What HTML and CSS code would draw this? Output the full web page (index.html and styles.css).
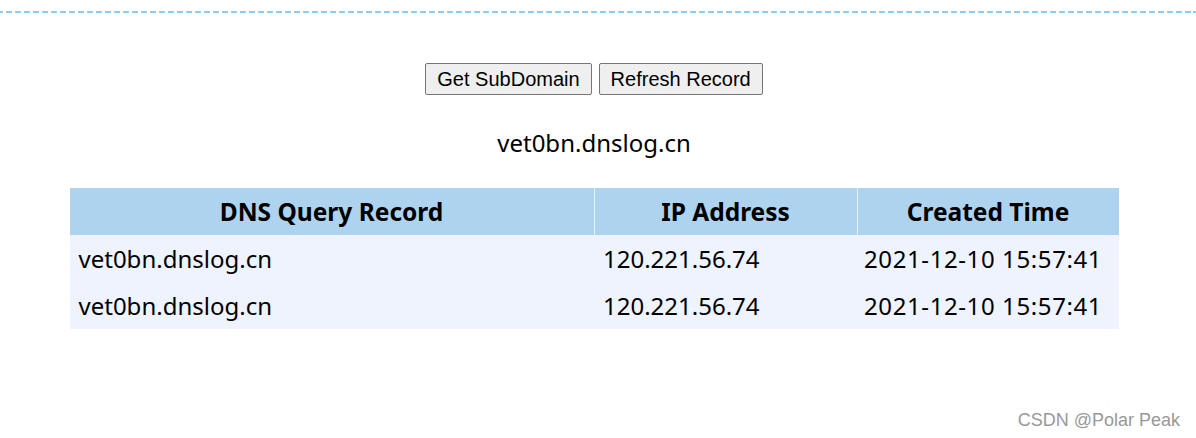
FILE: index.html
```html
<!DOCTYPE html>
<html lang="en">
<head>
<meta charset="utf-8">
<title>DNSLog</title>
<link rel="stylesheet" href="styles.css">
</head>
<body>
<div class="topline"></div>
<main class="page">
  <div class="actions">
    <button class="btn" type="button">Get SubDomain</button>
    <button class="btn" type="button">Refresh Record</button>
  </div>
  <p class="domain">vet0bn.dnslog.cn</p>
  <table class="records">
    <thead>
      <tr>
        <th class="c1">DNS Query Record</th>
        <th class="c2">IP Address</th>
        <th class="c3">Created Time</th>
      </tr>
    </thead>
    <tbody>
      <tr>
        <td>vet0bn.dnslog.cn</td>
        <td>120.221.56.74</td>
        <td class="time">2021-12-10 15:57:41</td>
      </tr>
      <tr>
        <td>vet0bn.dnslog.cn</td>
        <td>120.221.56.74</td>
        <td class="time">2021-12-10 15:57:41</td>
      </tr>
    </tbody>
  </table>
</main>
<div class="watermark">CSDN @Polar Peak</div>
</body>
</html>
```

FILE: styles.css
```css
html, body {
  margin: 0;
  padding: 0;
  background: #ffffff;
}
body {
  width: 1196px;
  height: 438px;
  position: relative;
  overflow: hidden;
  font-family: "Noto Sans", "Open Sans", sans-serif;
  color: #000;
}
.topline {
  margin-top: 11px;
  height: 2px;
  background: repeating-linear-gradient(to right, #8ccbf4 0 6px, transparent 6px 9px);
  background-position: -3px 0;
}
.page {
  width: 1188px;
  text-align: center;
}
.actions {
  display: flex;
  justify-content: center;
  gap: 7px;
  margin-top: 50px;
}
.btn {
  font-family: "Liberation Sans", Arial, sans-serif;
  font-size: 20px;
  height: 32px;
  padding: 0 11px;
  background: #efefef;
  border: 1px solid #767676;
  border-radius: 2px;
  color: #000;
}
.domain {
  margin: 32px 0 0;
  font-size: 24px;
  line-height: 32px;
}
.records {
  width: 1049px;
  margin: 29px auto 0;
  border-collapse: collapse;
  font-size: 24px;
}
.records th {
  background: #aed3ee;
  height: 47px;
  padding: 0;
  font-weight: bold;
  font-size: 24.5px;
}
.records th + th {
  border-left: 1px solid #e8f2fa;
}
.records .c1 { width: 524px; }
.records .c2 { width: 262px; }
.records td {
  background: #eef3fd;
  height: 47px;
  padding: 0 0 0 9px;
  text-align: left;
}
.records td.time {
  letter-spacing: 0.6px;
  padding-left: 7px;
}
.watermark {
  position: absolute;
  right: 16px;
  top: 410px;
  font-family: "Liberation Sans", Arial, sans-serif;
  font-size: 18px;
  color: #999999;
}
```
